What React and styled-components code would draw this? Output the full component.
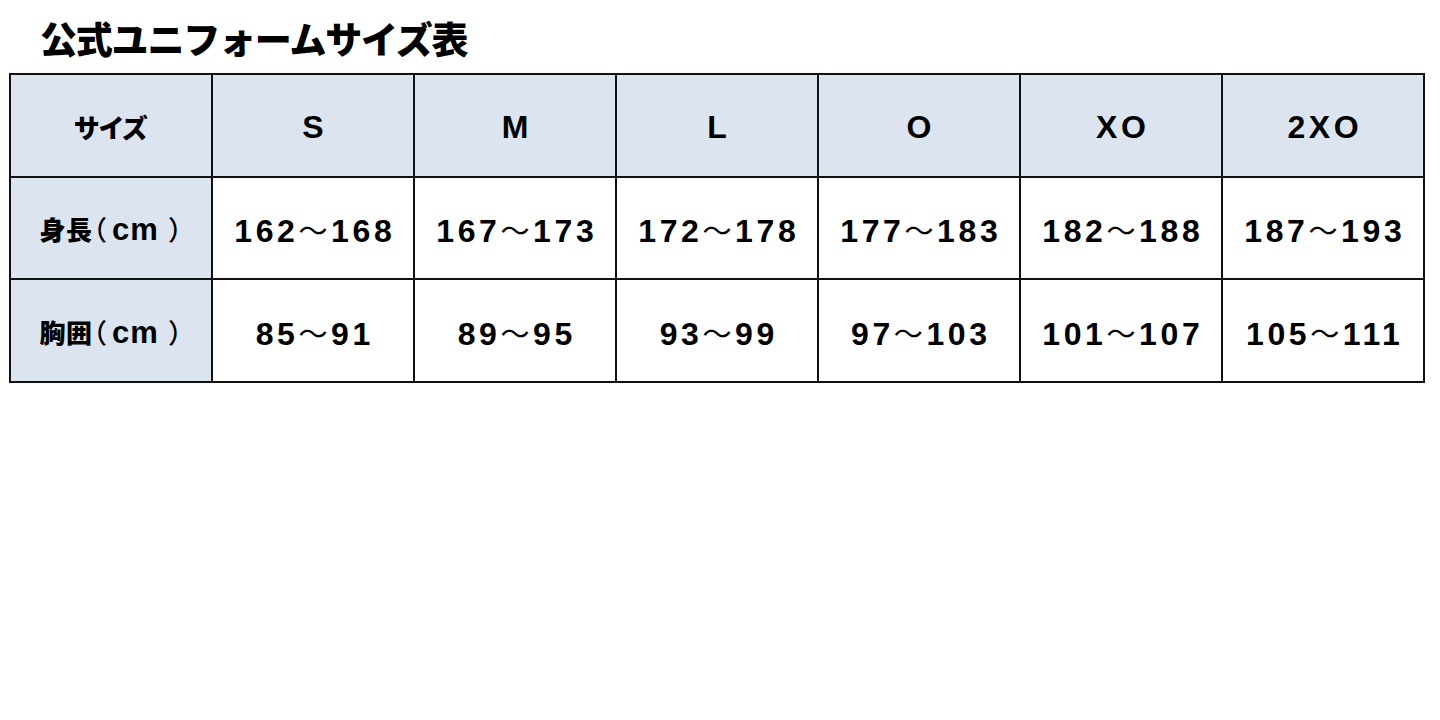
import React from "react";
import styled, { createGlobalStyle } from "styled-components";

const Global = createGlobalStyle`
  html, body { margin: 0; padding: 0; background: #ffffff; }
  body { font-family: "Liberation Sans", "Noto Sans CJK JP", sans-serif; color: #000; }
`;

const Page = styled.div`
  width: 1440px;
  height: 720px;
  padding: 13px 0 0 9px;
  box-sizing: border-box;
`;

const Title = styled.h1`
  margin: 0 0 10px 31px;
  font-family: "Noto Sans CJK JP", sans-serif;
  font-weight: 900;
  font-size: 37px;
  line-height: 50px;
  letter-spacing: -1.2px;
`;

const Table = styled.div`
  display: grid;
  grid-template-columns: repeat(7, 200px);
  grid-template-rows: repeat(3, 1fr);
  height: 310px;
  box-sizing: border-box;
  gap: 2px;
  padding: 2px;
  width: fit-content;
  background: #111;
`;

const Cell = styled.div`
  display: flex;
  align-items: center;
  justify-content: center;
  padding-top: 4px;
  box-sizing: border-box;
  background: ${(p) => (p.$head ? "#dce4ef" : "#ffffff")};
`;

const Text = styled.span`
  display: inline-block;
  font-family: "Liberation Sans", "Noto Sans CJK JP", sans-serif;
  font-weight: 700;
  font-size: ${(p) => (p.$tight ? "31px" : "32px")};
  line-height: 40px;
  letter-spacing: ${(p) => (p.$tight ? "1px" : "3.6px")};
  margin-right: ${(p) => (p.$tight ? "0" : "-3.6px")};
  white-space: nowrap;
  font-feature-settings: "palt";
`;

const Jp = styled.span`
  font-family: "Noto Sans CJK JP", sans-serif;
  font-weight: 900;
  font-size: 26px;
  letter-spacing: 0.5px;
`;

const Paren = styled.span`
  font-family: "Noto Sans CJK JP", sans-serif;
  font-weight: 500;
  font-size: 27px;
  letter-spacing: 0;
  margin: ${(p) => (p.$open ? "0 6px 0 0" : "0 0 0 10px")};
`;

const Wave = styled.span`
  font-family: "Noto Sans CJK JP", sans-serif;
  font-weight: 400;
  font-size: 29px;
`;

const sizes = ["S", "M", "L", "O", "XO", "2XO"];
const rows = [
  { label: "身長", values: [["162", "168"], ["167", "173"], ["172", "178"], ["177", "183"], ["182", "188"], ["187", "193"]] },
  { label: "胸囲", values: [["85", "91"], ["89", "95"], ["93", "99"], ["97", "103"], ["101", "107"], ["105", "111"]] },
];

export default function App() {
  return (
    <Page>
      <Global />
      <Title>公式ユニフォームサイズ表</Title>
      <Table>
        <Cell $head>
          <Text $tight><Jp>サイズ</Jp></Text>
        </Cell>
        {sizes.map((s) => (
          <Cell key={s} $head>
            <Text>{s}</Text>
          </Cell>
        ))}
        {rows.map((r) => (
          <React.Fragment key={r.label}>
            <Cell $head>
              <Text $tight>
                <Jp>{r.label}</Jp>
                <Paren $open>（</Paren>cm<Paren>）</Paren>
              </Text>
            </Cell>
            {r.values.map(([a, b]) => (
              <Cell key={a}>
                <Text>
                  {a}
                  <Wave>～</Wave>
                  {b}
                </Text>
              </Cell>
            ))}
          </React.Fragment>
        ))}
      </Table>
    </Page>
  );
}
